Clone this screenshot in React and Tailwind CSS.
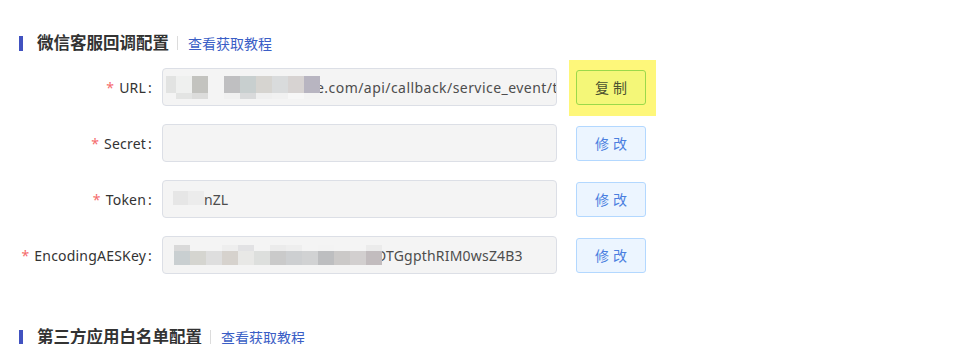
const font = { fontFamily: '"Noto Sans", "Noto Sans CJK SC", sans-serif' };

// pixelated blur, one array per band of cells: [height, [colors...]]
const Mosaic = ({ bands, cell = 16, first }) => (
  <div className="relative z-10 flex flex-col shrink-0">
    {bands.map(([h, colors], i) => (
      <div key={i} className="flex" style={{ height: h }}>
        {colors.map((c, j) => (
          <div key={j} style={{ width: j === 0 && first ? first : cell, background: c }} />
        ))}
      </div>
    ))}
  </div>
);

const SectionTitle = ({ title }) => (
  <div className="flex items-center h-5 pl-[19px]">
    <span className="w-[4px] h-[15px] bg-[#4152c0]" />
    <span className="ml-[14px] text-[16.5px] font-bold text-[#333]">{title}</span>
    <span className="ml-[8px] mr-[10px] w-px h-[14px] bg-[#dcdcdc]" />
    <a className="text-[14px] text-[#3a5ec6] cursor-pointer">查看获取教程</a>
  </div>
);

const Field = ({ label, children, action }) => (
  <div className="flex items-center h-[38px]">
    <label className="w-[162px] pr-[10px] text-right text-[14px] text-[#333] whitespace-nowrap tracking-[0.2px]">
      <span className="text-[#f56c6c] mr-[5px]">*</span>
      {label}
      <span className="ml-[2px]">:</span>
    </label>
    <div className="w-[395px] h-[38px] rounded-[4px] border border-[#dcdfe6] bg-[#f4f4f4] flex items-center pl-[3px] pr-[4px] overflow-hidden text-[14px] text-[#4d4d4d] whitespace-nowrap">
      {children}
    </div>
    <div className="ml-[19px]">{action}</div>
  </div>
);

const EditButton = () => (
  <button className="w-[70px] h-[35px] rounded-[3px] border border-[#b3d8ff] bg-[#ecf5ff] text-[#4a7fe0] text-[14px] tracking-[4px] pl-[4px]">
    修改
  </button>
);

// yellow highlight marker sits behind the copy button
const CopyButton = () => (
  <div className="relative isolate before:absolute before:-top-[10px] before:-bottom-[11px] before:-left-[7px] before:-right-[10px] before:bg-[#fef77a] before:-z-10">
    <button className="block w-[70px] h-[35px] rounded-[3px] border border-[#9bd94a] bg-[#f4f778] text-[#4b5230] text-[14px] tracking-[4px] pl-[4px]">
      复制
    </button>
  </div>
);

export default function App() {
  return (
    <div className="w-[961px] h-[344px] bg-white overflow-hidden pt-[33px]" style={font}>
      <SectionTitle title="微信客服回调配置" />

      <div className="mt-[15px] flex flex-col gap-[18px]">
        <Field label="URL" action={<CopyButton />}>
          <div className="flex items-start">
            <Mosaic
              first={10}
              bands={[
                [17, ['#e2e3e2', '#eff0ef', '#c3c3bf', '#f4f4f4', '#bfbfc1', '#c8cfcf', '#d6d4d0', '#d9dbdc', '#d7d3d2', '#b8b5c1']],
                [6, ['#f4f4f4', '#e3e4e3', '#dcdcdb', '#f4f4f4', '#f0f0f0', '#d9dadb', '#efefef', '#f1f1f1', '#f7f7f7', '#f3f3f3']],
              ]}
            />
          </div>
          <span className="-ml-[4px] relative tracking-[0.45px]">e.com/api/callback/service_event/thirdparty</span>
        </Field>

        <Field label="Secret" action={<EditButton />} />

        <Field label="Token" action={<EditButton />}>
          <div className="ml-[7px] flex items-start self-center -mt-[3px]">
            <Mosaic first={15} bands={[[14, ['#e6e6e6', '#ececec']]]} />
          </div>
          <span>nZL</span>
        </Field>

        <Field label="EncodingAESKey" action={<EditButton />}>
          <div className="ml-[8px] flex items-start">
            <Mosaic
              bands={[
                [6, ['#d9d9d9', '#f4f4f4', '#f4f4f4', '#eeeeee', '#e2e2e4', '#f4f4f4', '#ebebeb', '#eeeeee', '#f4f4f4', '#f3f3f3', '#f4f4f4', '#f4f4f4', '#ebebeb']],
                [14, ['#c9cfd1', '#d5d5d0', '#dedede', '#d6d2cd', '#e8e8e6', '#dddfdd', '#cacaca', '#cdcfd1', '#d1d2d3', '#bdbec0', '#cbc9c8', '#d2cfcf', '#c2bcbe']],
              ]}
            />
          </div>
          <span className="-ml-[6px] tracking-[0.2px]">DTGgpthRIM0wsZ4B3</span>
        </Field>
      </div>

      <div className="mt-[53px]">
        <SectionTitle title="第三方应用白名单配置" />
      </div>
    </div>
  );
}
